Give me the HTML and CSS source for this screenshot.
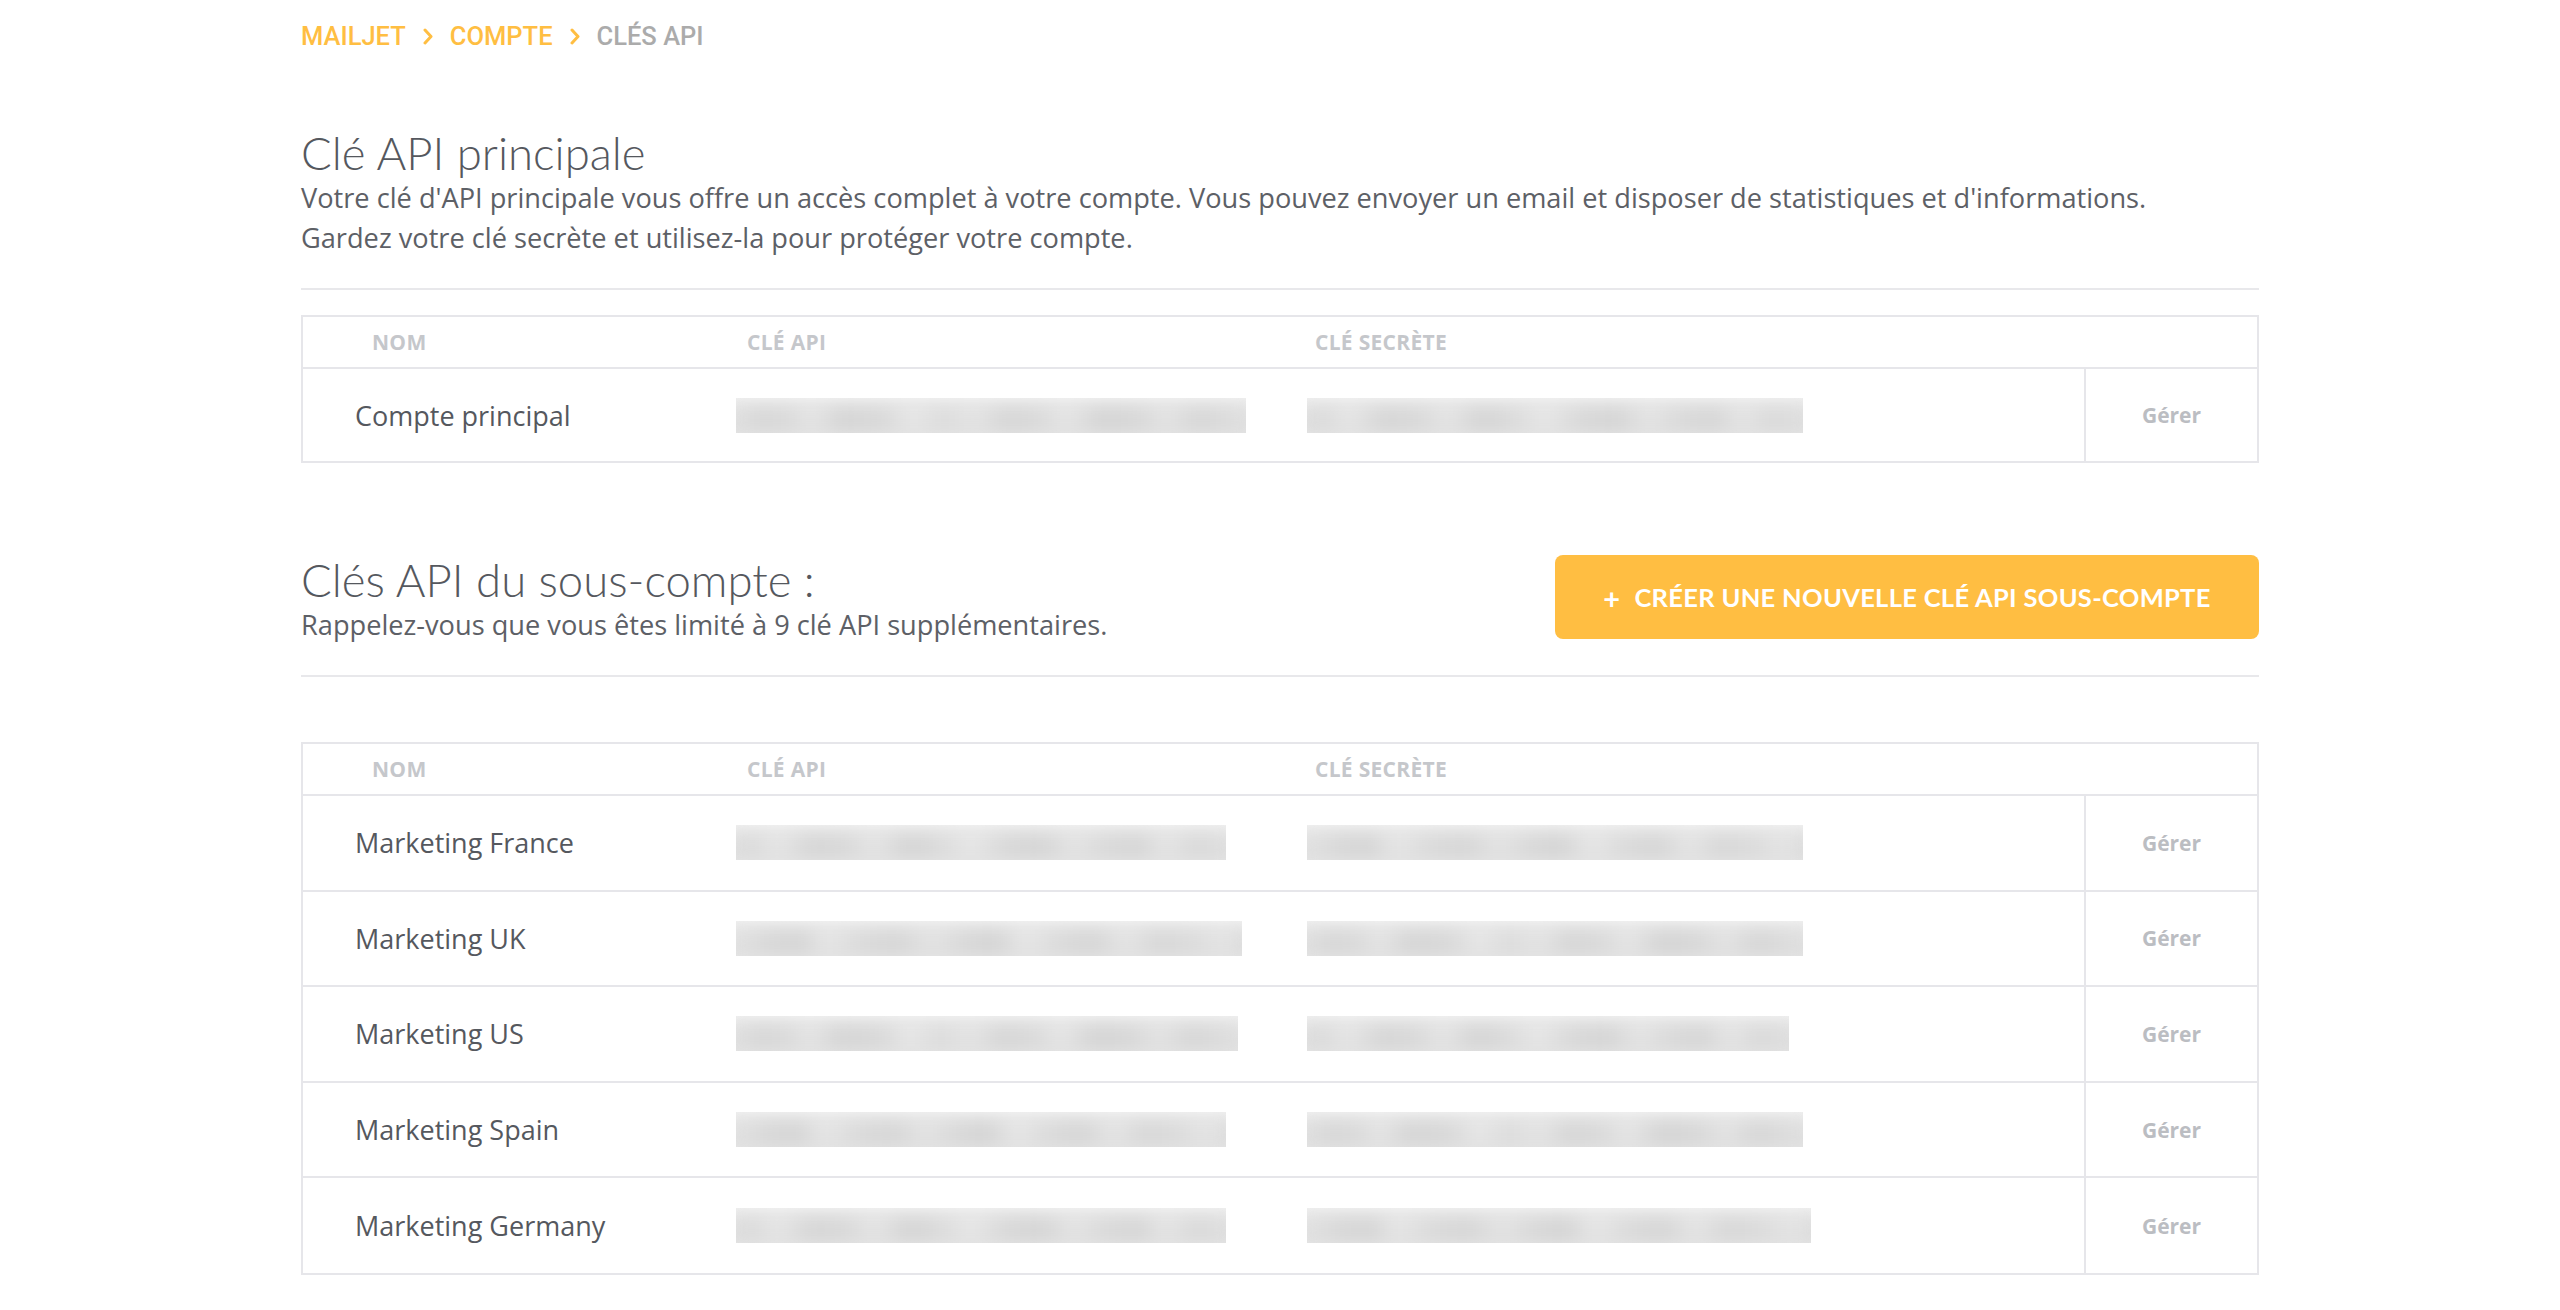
FILE: index.html
```html
<!DOCTYPE html>
<html lang="fr">
<head>
<meta charset="utf-8">
<title>Clés API</title>
<link rel="stylesheet" href="styles.css">
</head>
<body>
<div class="page">
  <nav class="breadcrumb">
    <a class="crumb link">MAILJET</a>
    <svg class="chev" viewBox="0 0 10 17" width="10" height="17"><polyline points="2,2 8,8.5 2,15" fill="none" stroke="#FFBE42" stroke-width="3" stroke-linecap="round" stroke-linejoin="round"/></svg>
    <a class="crumb link">COMPTE</a>
    <svg class="chev" viewBox="0 0 10 17" width="10" height="17"><polyline points="2,2 8,8.5 2,15" fill="none" stroke="#FFBE42" stroke-width="3" stroke-linecap="round" stroke-linejoin="round"/></svg>
    <span class="crumb current">CLÉS API</span>
  </nav>

  <section class="main-key">
    <h1 class="title">Clé API principale</h1>
    <p class="desc">Votre clé d'API principale vous offre un accès complet à votre compte. Vous pouvez envoyer un email et disposer de statistiques et d'informations.<br>Gardez votre clé secrète et utilisez-la pour protéger votre compte.</p>
    <hr class="sep">
    <div class="table">
      <div class="thead">
        <div class="th th-name">NOM</div>
        <div class="th th-key">CLÉ API</div>
        <div class="th th-secret">CLÉ SECRÈTE</div>
      </div>
      <div class="row">
        <div class="cell name">Compte principal</div>
        <div class="cell"><div class="blur w510 p1"></div></div>
        <div class="cell"><div class="blur w496 p2"></div></div>
        <div class="cell action">Gérer</div>
      </div>
    </div>
  </section>

  <section class="sub-keys">
    <div class="sub-head">
      <div>
        <h2 class="title">Clés API du sous-compte :</h2>
        <p class="desc">Rappelez-vous que vous êtes limité à 9 clé API supplémentaires.</p>
      </div>
      <button class="btn"><span class="plus">+</span>CRÉER UNE NOUVELLE CLÉ API SOUS-COMPTE</button>
    </div>
    <hr class="sep">
    <div class="table table2">
      <div class="thead">
        <div class="th th-name">NOM</div>
        <div class="th th-key">CLÉ API</div>
        <div class="th th-secret">CLÉ SECRÈTE</div>
      </div>
      <div class="row">
        <div class="cell name">Marketing France</div>
        <div class="cell"><div class="blur w490 p2"></div></div>
        <div class="cell"><div class="blur w496 p3"></div></div>
        <div class="cell action">Gérer</div>
      </div>
      <div class="row">
        <div class="cell name">Marketing UK</div>
        <div class="cell"><div class="blur w506 p3"></div></div>
        <div class="cell"><div class="blur w496 p1"></div></div>
        <div class="cell action">Gérer</div>
      </div>
      <div class="row">
        <div class="cell name">Marketing US</div>
        <div class="cell"><div class="blur w502 p1"></div></div>
        <div class="cell"><div class="blur w482 p2"></div></div>
        <div class="cell action">Gérer</div>
      </div>
      <div class="row">
        <div class="cell name">Marketing Spain</div>
        <div class="cell"><div class="blur w490 p3"></div></div>
        <div class="cell"><div class="blur w496 p1"></div></div>
        <div class="cell action">Gérer</div>
      </div>
      <div class="row">
        <div class="cell name">Marketing Germany</div>
        <div class="cell"><div class="blur w490 p2"></div></div>
        <div class="cell"><div class="blur w504 p3"></div></div>
        <div class="cell action">Gérer</div>
      </div>
    </div>
  </section>
</div>
</body>
</html>
```

FILE: styles.css
```css
* { box-sizing: border-box; }

html, body {
  margin: 0;
  padding: 0;
  background: #ffffff;
}

body {
  font-family: "Open Sans", "Lato", sans-serif;
  color: #5a5d63;
}

.page {
  width: 1958px;
  margin: 0 auto;
}

/* breadcrumb */
.breadcrumb {
  display: flex;
  align-items: center;
  gap: 17px;
  height: 30px;
  margin-top: 21px;
  font-family: "Roboto", sans-serif;
  font-size: 25.5px;
  font-weight: 500;
}

.crumb.link { color: #FFBE42; }
.crumb.current { color: #ababab; }
.chev { flex: none; }

/* headings */
.title {
  margin: 0;
  font-family: "Lato", sans-serif;
  font-weight: 300;
  font-size: 45.5px;
  line-height: 50px;
  color: #55585e;
}

.main-key .title { margin-top: 77px; }

.desc {
  margin: 0;
  font-size: 27.2px;
  line-height: 40px;
  color: #5d6066;
}

.sep {
  margin: 30px 0 0;
  border: 0;
  border-top: 2px solid #e8e8eb;
  height: 0;
}

/* tables */
.table {
  margin-top: 25px;
  border: 2px solid #e6e6ea;
}

.table2 { margin-top: 65px; }

.thead {
  display: grid;
  grid-template-columns: 433px 571px 777px 173px;
  height: 52px;
  align-items: center;
  border-bottom: 2px solid #e6e6ea;
}

.th {
  font-size: 21px;
  font-weight: 700;
  color: #c5c7cb;
  letter-spacing: 0.3px;
}

.th-name { padding-left: 69px; }
.th-key { padding-left: 11px; }
.th-secret { padding-left: 8px; }

.row {
  display: grid;
  grid-template-columns: 433px 571px 777px 173px;
  height: 95.6px;
  border-bottom: 2px solid #e6e6ea;
}

.table > .row:last-child { border-bottom: 0; height: 95px; }
.main-key .table > .row:last-child { height: 92px; }

.cell {
  display: flex;
  align-items: center;
}

.cell.name {
  padding-left: 52px;
  font-size: 27px;
  color: #55585e;
}

.cell.action {
  justify-content: center;
  border-left: 2px solid #e6e6ea;
  font-size: 21px;
  font-weight: 700;
  color: #bbbdc2;
}

/* blurred keys */
.blur {
  position: relative;
  height: 35px;
  overflow: hidden;
  background: linear-gradient(to bottom, #f0f0f0 0%, #e7e7e7 35%, #dedede 70%, #e3e3e3 100%);
}

.blur::before {
  content: "";
  position: absolute;
  left: -10px;
  right: -10px;
  top: 9px;
  bottom: 3px;
  filter: blur(9px);
}

.p1::before {
  background: linear-gradient(90deg,
    #e4e4e4 0%, #d7d7d7 6%, #dadada 12%, #e6e6e6 16%, #d4d4d4 22%,
    #d9d9d9 30%, #e8e8e8 35%, #dcdcdc 41%, #e5e5e5 47%, #d5d5d5 53%,
    #dbdbdb 60%, #e7e7e7 64%, #d3d3d3 71%, #d8d8d8 78%, #e4e4e4 83%,
    #d6d6d6 89%, #dcdcdc 95%, #e3e3e3 100%);
}

.p2::before {
  background: linear-gradient(90deg,
    #e2e2e2 0%, #dadada 5%, #e7e7e7 10%, #d5d5d5 17%, #d9d9d9 24%,
    #e6e6e6 29%, #d3d3d3 36%, #dddddd 43%, #e8e8e8 48%, #d8d8d8 55%,
    #d4d4d4 62%, #e5e5e5 68%, #dadada 74%, #d5d5d5 81%, #e6e6e6 86%,
    #d9d9d9 92%, #e1e1e1 100%);
}

.p3::before {
  background: linear-gradient(90deg,
    #e5e5e5 0%, #d8d8d8 8%, #d4d4d4 14%, #e7e7e7 19%, #dadada 26%,
    #d6d6d6 33%, #e4e4e4 39%, #d9d9d9 45%, #d3d3d3 51%, #e8e8e8 57%,
    #dbdbdb 63%, #d5d5d5 70%, #e6e6e6 76%, #d7d7d7 82%, #dcdcdc 89%,
    #e5e5e5 94%, #dadada 100%);
}

.w482 { width: 482px; }
.w490 { width: 490px; }
.w496 { width: 496px; }
.w502 { width: 502px; }
.w504 { width: 504px; }
.w506 { width: 506px; }
.w510 { width: 510px; }

/* sub keys */
.sub-keys { margin-top: 92px; }

.sub-head {
  display: flex;
  justify-content: space-between;
  align-items: flex-start;
}

.btn {
  margin-top: 0;
  width: 704px;
  height: 84px;
  border: 0;
  border-radius: 8px;
  background: #FFBE42;
  color: #ffffff;
  font-family: "Lato", sans-serif;
  font-size: 25.5px;
  font-weight: 700;
  letter-spacing: 0.3px;
  display: flex;
  align-items: center;
  justify-content: center;
  gap: 14px;
  padding: 0;
}

.plus {
  font-size: 29px;
  font-weight: 700;
}
```
